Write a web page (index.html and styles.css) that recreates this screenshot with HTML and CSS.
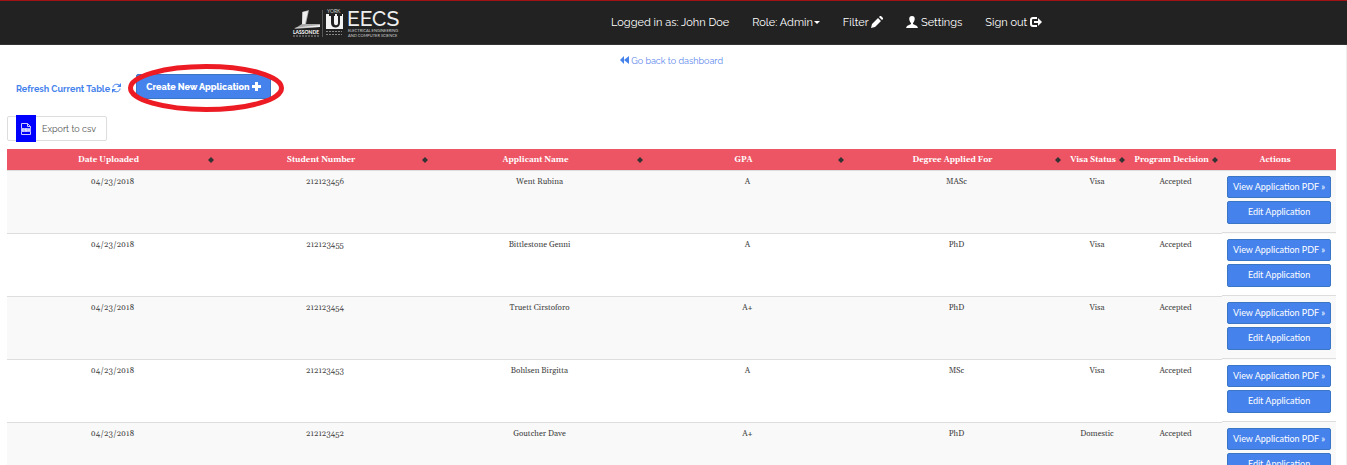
FILE: index.html
```html
<!DOCTYPE html>
<html lang="en">
<head>
<meta charset="utf-8">
<title>Applications</title>
<link rel="stylesheet" href="styles.css">
</head>
<body>
<header class="navbar">
  <a class="brand" href="#" aria-label="Lassonde EECS">
    <svg width="112" height="34" viewBox="0 -4 112 34">
      <path d="M10 3l7-2-3 14h14v3L2 20l8-5z" fill="#aaa"/>
      <path d="M11 3l5-1-3 13h-3zM1 19l27-3v2z" fill="#eee"/>
      <text x="1" y="25" class="logo-bold" font-size="5">LASSONDE</text>
      <path d="M1 27h27" stroke="#999" stroke-dasharray="2 1"/>
      <path d="M30.500 1v27" stroke="#555"/>
      <text x="35" y="4" class="logo-text" font-size="5">YORK</text>
      <path d="M34 5h17v15H34z" fill="#f4f4f4"/>
      <path d="M37 5v2h2v7c0 6 9 6 9 0V7h2V5h-5v2h1v7c0 3-4 3-4 0V7h1V5z" fill="#222"/>
      <path d="M34 22.500h16M34 25.500h16" stroke="#888" stroke-dasharray="2 1"/>
      <text x="55" y="17" class="logo-name" font-size="21">EECS</text>
      <text x="56" y="23" class="logo-text" font-size="4">ELECTRICAL ENGINEERING</text>
      <text x="56" y="28" class="logo-text" font-size="4">AND COMPUTER SCIENCE</text>
    </svg>
  </a>
  <nav class="menu">
    <span>Logged in as: John Doe</span>
    <a href="#">Role: Admin<i class="caret"></i></a>
    <a href="#">Filter <svg width="12" height="12" viewBox="0 0 12 12"><path d="M0 12l1-4 6-6 3 3-6 6zM8 1l1-1h1l2 2v1l-1 1z" fill="#fff"/></svg></a>
    <a href="#"><svg width="12" height="12" viewBox="0 0 12 12"><path d="M6 0c4 0 3 5 1 7v1l4 2 1 2H0l1-2 4-2V7C3 5 2 0 6 0z" fill="#fff"/></svg> Settings</a>
    <a href="#">Sign out <svg width="12" height="12" viewBox="0 0 12 12"><path d="M7 2H3Q1 2 1 4v4q0 2 2 2h4" fill="none" stroke="#fff" stroke-width="2"/><path d="M4 5h4V2l4 4-4 4V7H4z" fill="#fff"/></svg></a>
  </nav>
</header>
<main class="page">
  <a class="back" href="#"><svg width="9" height="8" viewBox="0 0 9 8"><path d="M4 0v8L0 4zM9 0v8L4 4z" fill="#4582ec"/></svg> Go back to dashboard</a>
  <div class="toolbar">
    <a class="refresh" href="#">Refresh Current Table <svg width="9" height="10" viewBox="0 0 9 10"><path d="M1 4.500C1 1 6 0 8 3M8 5.500C8 9 3 10 1 7" fill="none" stroke="#4582ec"/><path d="M9 0v4H5zM0 10V6h4z" fill="#4582ec"/></svg></a>
    <div class="highlight">
      <button class="btn create" type="button">Create New Application <svg width="9" height="9" viewBox="0 0 9 9"><path d="M3 0h3v3h3v3H6v3H3V6H0V3h3z" fill="#fff"/></svg></button>
      <svg class="ring" width="158" height="50" viewBox="0 0 158 50"><ellipse cx="79" cy="25" rx="75.500" ry="21.500" fill="none" stroke="#ed1c24" stroke-width="5"/></svg>
    </div>
  </div>
  <button class="export" type="button">
    <span class="file"><svg width="10" height="12" viewBox="0 0 10 12"><path d="M.5 5V.5h6l3 3V5M6.500.5v3h3M.5 9v2.500h9V9" fill="none" stroke="#ccf"/><path d="M0 5h10v4H0z" fill="#aaaaff"/><path d="M3 6H1v2h2M6 6H4v1h2v1H4M7 6l1 2 1-2" fill="none" stroke="#fff" stroke-width=".6"/></svg></span>
    <span>Export to csv</span>
  </button>
  <table class="grid">
    <colgroup><col class="c-date"><col class="c-number"><col class="c-name"><col class="c-gpa"><col class="c-degree"><col class="c-visa"><col class="c-decision"><col class="c-actions"></colgroup>
    <thead><tr><th class="sort">Date Uploaded</th><th class="sort">Student Number</th><th class="sort">Applicant Name</th><th class="sort">GPA</th><th class="sort">Degree Applied For</th><th class="sort">Visa Status</th><th class="sort">Program Decision</th><th>Actions</th></tr></thead>
    <tbody>
      <tr><td>04/23/2018</td><td>212123456</td><td>Went Rubina</td><td>A</td><td>MASc</td><td>Visa</td><td>Accepted</td><td class="actions"><button class="btn view" type="button">View Application PDF »</button><button class="btn edit" type="button">Edit Application</button></td></tr>
      <tr><td>04/23/2018</td><td>212123455</td><td>Bittlestone Genni</td><td>A</td><td>PhD</td><td>Visa</td><td>Accepted</td><td class="actions"><button class="btn view" type="button">View Application PDF »</button><button class="btn edit" type="button">Edit Application</button></td></tr>
      <tr><td>04/23/2018</td><td>212123454</td><td>Truett Cirstoforo</td><td>A+</td><td>PhD</td><td>Visa</td><td>Accepted</td><td class="actions"><button class="btn view" type="button">View Application PDF »</button><button class="btn edit" type="button">Edit Application</button></td></tr>
      <tr><td>04/23/2018</td><td>212123453</td><td>Bohlsen Birgitta</td><td>A</td><td>MSc</td><td>Visa</td><td>Accepted</td><td class="actions"><button class="btn view" type="button">View Application PDF »</button><button class="btn edit" type="button">Edit Application</button></td></tr>
      <tr><td>04/23/2018</td><td>212123452</td><td>Goutcher Dave</td><td>A+</td><td>PhD</td><td>Domestic</td><td>Accepted</td><td class="actions"><button class="btn view" type="button">View Application PDF »</button><button class="btn edit" type="button">Edit Application</button></td></tr>
    </tbody>
  </table>
</main>
</body>
</html>
```

FILE: styles.css
```css
* { box-sizing: border-box; }
html { overflow: hidden; }
body {
  margin: 0;
  background: #fff;
  color: #333;
  font-family: Raleway, Lato, "Open Sans", sans-serif;
  font-size: 9px;
  line-height: 14px;
}
a { color: #4582ec; text-decoration: none; }
button { font-family: Raleway, Lato, "Open Sans", sans-serif; cursor: pointer; }
.navbar {
  display: flex;
  height: 45px;
  padding-left: 292px;
  background: #222;
  border-top: 1px solid #a01418;
  border-bottom: 1px solid #333;
}
.brand { padding-top: 4px; }
.brand svg { display: block; }
.logo-bold, .logo-text, .logo-name { font-family: Lato, sans-serif; fill: #ccc; }
.logo-bold { font-weight: 700; fill: #fff; }
.logo-name { fill: #eee; font-family: Raleway, Lato, sans-serif; font-weight: 500; }
.menu {
  display: flex;
  align-items: center;
  gap: 23px;
  padding-left: 207px;
  font-size: 11px;
  color: #fff;
  white-space: nowrap;
}
.menu a { color: #fff; }
.menu svg { vertical-align: -2px; }
.caret {
  display: inline-block;
  vertical-align: middle;
  margin-left: 1px;
  border: 3px solid transparent;
  border-top-color: #fff;
  border-bottom: 0;
}
.page { padding: 0 10px 0 7px; border-right: 1px solid #eee; }
.back { display: block; padding-top: 9px; text-align: center; color: #6088ec; }
.toolbar { display: flex; align-items: flex-end; gap: 15px; padding: 6px 0 0 9px; font-weight: 700; }
.refresh { padding-bottom: 3px; }
.refresh svg, .create svg { vertical-align: -1px; }
.highlight { position: relative; }
.ring { position: absolute; left: -9px; top: -11px; pointer-events: none; }
.btn {
  display: block;
  padding: 0;
  color: #fff;
  background: #4582ec;
  border: 1px solid #3a76c4;
  border-radius: 2px;
  font-size: 9px;
  line-height: 20px;
}
.create { padding: 2px 9px 1px; font-weight: 800; white-space: nowrap; }
.export {
  display: flex;
  align-items: center;
  height: 25px;
  margin: 17px 0 8px;
  padding: 0 10px 0 8px;
  gap: 6px;
  color: #555;
  background: #fff;
  border: 1px solid #ddd;
  border-radius: 2px;
  font-size: 9px;
}
.file { display: flex; align-items: center; justify-content: center; width: 20px; height: 27px; background: #00f; }
.grid {
  width: 100%;
  table-layout: fixed;
  border-collapse: separate;
  border-spacing: 0;
  font-family: Georgia, Gelasio, "Liberation Serif", serif;
  font-size: 8px;
  line-height: 12px;
  text-align: center;
}
.c-date { width: 15.880%; }
.c-number { width: 16.100%; }
.c-name { width: 16.180%; }
.c-gpa { width: 15.120%; }
.c-degree { width: 16.330%; }
.c-visa { width: 4.820%; }
.c-decision { width: 7%; }
.c-actions { width: 8.570%; }
.grid th {
  position: relative;
  padding: 5px 8px 4px 0;
  color: #fff;
  background: #ed5565;
  border-bottom: 1px solid #ddd;
  white-space: nowrap;
}
.sort::before, .sort::after {
  content: "";
  position: absolute;
  right: 4px;
  border: 3px solid transparent;
}
.sort::before { top: 8px; border-top: 0; border-bottom-color: #333; }
.sort::after { top: 11px; border-bottom: 0; border-top-color: #333; }
.grid td { height: 63px; padding: 5px 0; color: #444; border-bottom: 1px solid #ddd; vertical-align: top; }
.grid tr:nth-child(odd) td { background: #f9f9f9; }
.grid .actions { padding: 5px 5px 0; border-bottom-color: #f9f9f9; box-shadow: inset 0 -1px #ddd; }
.actions .btn { width: 100%; font-family: Lato, sans-serif; }
.edit { margin-top: 3px; padding-bottom: 1px; }
```
